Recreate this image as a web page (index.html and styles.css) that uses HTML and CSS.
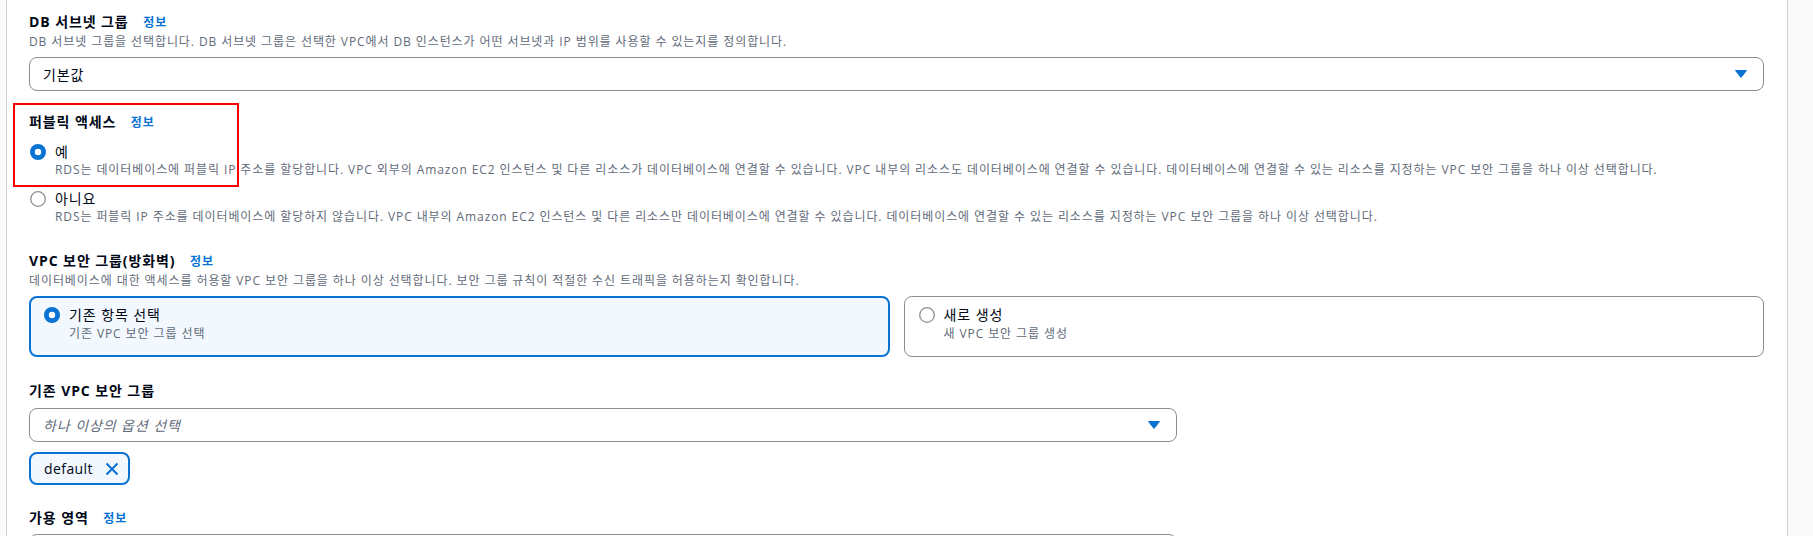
FILE: index.html
```html
<!DOCTYPE html>
<html lang="ko">
<head>
<meta charset="utf-8">
<link rel="stylesheet" href="styles.css">
</head>
<body>
<div class="page">
  <div class="gutter-left"></div>
  <main class="main">
    <section class="field first">
      <div class="label">DB 서브넷 그룹 <a class="info">정보</a></div>
      <div class="desc">DB 서브넷 그룹을 선택합니다. DB 서브넷 그룹은 선택한 VPC에서 DB 인스턴스가 어떤 서브넷과 IP 범위를 사용할 수 있는지를 정의합니다.</div>
      <div class="select">
        <span class="value">기본값</span>
        <svg class="caret" viewBox="0 0 12 8" width="12" height="8"><path d="M0.5 0.5h11L6 7.5z" fill="#0972d3" stroke="#0972d3" stroke-linejoin="round"/></svg>
      </div>
    </section>

    <section class="field public">
      <div class="annotation"></div>
      <div class="label">퍼블릭 액세스 <a class="info">정보</a></div>
      <div class="radio-group">
        <div class="option">
          <div class="option-row">
            <svg class="radio" viewBox="0 0 16 16" width="16" height="16"><circle cx="8" cy="8" r="8" fill="#0972d3"/><circle cx="8" cy="8" r="3.2" fill="#fff"/></svg>
            <span class="option-label">예</span>
          </div>
          <div class="option-desc">RDS는 데이터베이스에 퍼블릭 IP 주소를 할당합니다. VPC 외부의 Amazon EC2 인스턴스 및 다른 리소스가 데이터베이스에 연결할 수 있습니다. VPC 내부의 리소스도 데이터베이스에 연결할 수 있습니다. 데이터베이스에 연결할 수 있는 리소스를 지정하는 VPC 보안 그룹을 하나 이상 선택합니다.</div>
        </div>
        <div class="option second">
          <div class="option-row">
            <svg class="radio" viewBox="0 0 16 16" width="16" height="16"><circle cx="8" cy="8" r="7.3" fill="#fff" stroke="#8c8c94" stroke-width="1.3"/></svg>
            <span class="option-label">아니요</span>
          </div>
          <div class="option-desc">RDS는 퍼블릭 IP 주소를 데이터베이스에 할당하지 않습니다. VPC 내부의 Amazon EC2 인스턴스 및 다른 리소스만 데이터베이스에 연결할 수 있습니다. 데이터베이스에 연결할 수 있는 리소스를 지정하는 VPC 보안 그룹을 하나 이상 선택합니다.</div>
        </div>
      </div>
    </section>

    <section class="field vpc">
      <div class="label">VPC 보안 그룹(방화벽) <a class="info">정보</a></div>
      <div class="desc">데이터베이스에 대한 액세스를 허용할 VPC 보안 그룹을 하나 이상 선택합니다. 보안 그룹 규칙이 적절한 수신 트래픽을 허용하는지 확인합니다.</div>
      <div class="tiles">
        <div class="tile selected">
          <div class="tile-row">
            <svg class="radio" viewBox="0 0 16 16" width="16" height="16"><circle cx="8" cy="8" r="8" fill="#0972d3"/><circle cx="8" cy="8" r="3.2" fill="#fff"/></svg>
            <span class="option-label">기존 항목 선택</span>
          </div>
          <div class="tile-desc">기존 VPC 보안 그룹 선택</div>
        </div>
        <div class="tile">
          <div class="tile-row">
            <svg class="radio" viewBox="0 0 16 16" width="16" height="16"><circle cx="8" cy="8" r="7.3" fill="#fff" stroke="#8c8c94" stroke-width="1.3"/></svg>
            <span class="option-label">새로 생성</span>
          </div>
          <div class="tile-desc">새 VPC 보안 그룹 생성</div>
        </div>
      </div>
    </section>

    <section class="field existing">
      <div class="label">기존 VPC 보안 그룹</div>
      <div class="select narrow">
        <span class="placeholder">하나 이상의 옵션 선택</span>
        <svg class="caret" viewBox="0 0 12 8" width="12" height="8"><path d="M0.5 0.5h11L6 7.5z" fill="#0972d3" stroke="#0972d3" stroke-linejoin="round"/></svg>
      </div>
      <div class="tokens">
        <span class="token">default
          <svg class="dismiss" viewBox="0 0 14 14" width="14" height="14"><path d="M1.5 1.5l11 11M12.5 1.5l-11 11" stroke="#0972d3" stroke-width="2" fill="none"/></svg>
        </span>
      </div>
    </section>

    <section class="field az">
      <div class="label">가용 영역 <a class="info">정보</a></div>
      <div class="select narrow"></div>
    </section>
  </main>
  <div class="gutter-right"></div>
</div>
</body>
</html>
```

FILE: styles.css
```css
html, body {
  margin: 0;
  padding: 0;
  background: #ffffff;
}

body {
  font-family: "Open Sans", "Noto Sans CJK KR", sans-serif;
  color: #000716;
  font-size: 14px;
  letter-spacing: 0.065em;
  height: 536px;
  overflow: hidden;
}

.page {
  display: flex;
  height: 536px;
  overflow: hidden;
}

.gutter-left {
  width: 6px;
  flex: none;
  background: #fafafa;
  border-right: 1px solid #d1d1d6;
}

.gutter-right {
  width: 25px;
  flex: none;
  background: #fafafa;
  border-left: 1px solid #d1d1d6;
}

.main {
  flex: 1;
  padding: 11px 23px 0 22px;
  min-width: 0;
  overflow: hidden;
}

.field {
  position: relative;
}

.public { margin-top: 20px; }
.vpc { margin-top: 25px; }
.existing { margin-top: 23px; }
.az { margin-top: 22px; }

.label {
  font-size: 14px;
  line-height: 22px;
  height: 22px;
  font-weight: 700;
  color: #000716;
  white-space: nowrap;
}

.info {
  font-size: 12px;
  font-weight: 700;
  color: #0972d3;
  margin-left: 10px;
}

.desc {
  font-size: 12px;
  line-height: 16px;
  height: 16px;
  color: #5f6b7a;
  margin-top: 1px;
  white-space: nowrap;
}

.select {
  margin-top: 7px;
  height: 34px;
  box-sizing: border-box;
  border: 1px solid #8c8c94;
  border-radius: 8px;
  display: flex;
  align-items: center;
  justify-content: space-between;
  padding: 0 16px 0 13px;
  background: #fff;
}

.select.narrow {
  width: 1148px;
}

.existing .select { margin-top: 6px; }
.az .select { margin-top: 5px; }

.value {
  font-size: 14px;
  color: #000716;
}

.placeholder {
  font-size: 14px;
  font-style: italic;
  color: #5f6b7a;
}

.caret {
  display: block;
  flex: none;
}

.annotation {
  position: absolute;
  left: -16px;
  top: -8px;
  width: 226px;
  height: 84px;
  box-sizing: border-box;
  border: 2px solid #ff0000;
  pointer-events: none;
}

.radio-group {
  margin-top: 9px;
}

.option.second {
  margin-top: 11px;
}

.option-row {
  display: flex;
  align-items: center;
  height: 20px;
}

.option-row .radio {
  margin-left: 1px;
  margin-right: 9px;
}

.radio {
  display: block;
  flex: none;
}

.option-label {
  font-size: 14px;
  line-height: 20px;
  color: #000716;
}

.option-desc {
  font-size: 12px;
  line-height: 16px;
  height: 16px;
  color: #5f6b7a;
  padding-left: 26px;
  white-space: nowrap;
}

.tiles {
  margin-top: 7px;
  display: grid;
  grid-template-columns: 1fr 1fr;
  gap: 14px;
}

.tile {
  height: 61px;
  box-sizing: border-box;
  border: 1px solid #8c8c94;
  border-radius: 8px;
  padding: 8px 14px 0 14px;
  background: #fff;
}

.tile.selected {
  border: 2px solid #0972d3;
  background: #f2f8fd;
  padding: 7px 13px 0 13px;
}

.tile-row {
  display: flex;
  align-items: center;
  height: 20px;
  gap: 9px;
}

.tile-desc {
  font-size: 12px;
  line-height: 16px;
  height: 16px;
  color: #5f6b7a;
  padding-left: 25px;
  margin-top: 1px;
}

.tokens {
  margin-top: 10px;
  display: flex;
}

.token {
  display: inline-flex;
  align-items: center;
  height: 33px;
  box-sizing: border-box;
  border: 2px solid #0972d3;
  border-radius: 8px;
  background: #f2f8fd;
  padding: 0 9px 0 13px;
  font-size: 14px;
  letter-spacing: 0.03em;
  color: #000716;
  gap: 12px;
}

.dismiss {
  display: block;
}
```
